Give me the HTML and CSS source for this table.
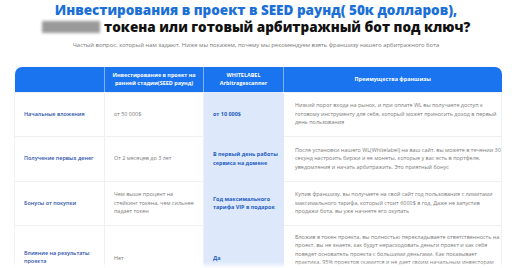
FILE: index.html
```html
<!DOCTYPE html>
<html lang="ru">
<head>
<meta charset="utf-8">
<link rel="stylesheet" href="styles.css">
</head>
<body>
<header class="hero">
  <h1 class="title">
    <span class="title-blue">Инвестирования в проект в SEED раунд( 50к долларов),</span>
    <span class="title-dark"><span class="blurred"></span> токена или готовый арбитражный бот под ключ?</span>
  </h1>
  <p class="subtitle">Частый вопрос, который нам задают. Ниже мы покажем, почему мы рекомендуем взять франшизу нашего арбитражного бота</p>
</header>
<div class="table-wrap">
  <table class="compare">
    <colgroup>
      <col class="c1"><col class="c2"><col class="c3"><col class="c4">
    </colgroup>
    <thead>
      <tr>
        <th></th>
        <th>Инвестирование в проект на<br>ранней стадии(SEED раунд)</th>
        <th>WHITELABEL<br>Arbitragescanner</th>
        <th>Преимущества франшизы</th>
      </tr>
    </thead>
    <tbody>
      <tr class="r1">
        <td class="label">Начальные вложения</td>
        <td class="plain">от 50 000$</td>
        <td class="wl">от 10 000$</td>
        <td class="desc">Низкий порог входа на рынок, и при оплате WL вы получаете доступ к<br>готовому инструменту для себя, который может приносить доход в первый<br>день пользования</td>
      </tr>
      <tr class="r2">
        <td class="label">Получение первых денег</td>
        <td class="plain">От 2 месяцев до 3 лет</td>
        <td class="wl">В первый день работы<br>сервиса на домене</td>
        <td class="desc">После установки нашего WL(Whitelabel) на ваш сайт, вы можете в течении 30<br>секунд настроить биржи и ее монеты, которые у вас есть в портфеле,<br>уведомления и начать арбитражить. Это приятный бонус</td>
      </tr>
      <tr class="r3">
        <td class="label">Бонусы от покупки</td>
        <td class="plain">Чем выше процент на<br>стейкинг токена, чем сильнее<br>падает токен</td>
        <td class="wl">Год максимального<br>тарифа VIP в подарок</td>
        <td class="desc">Купив франшизу, вы получаете на свой сайт год пользования с лимитами<br>максимального тарифа, который стоит 6000$ в год. Даже не запустив<br>продажи бота, вы уже начнете его окупать</td>
      </tr>
      <tr class="r4">
        <td class="label">Влияние на результаты<br>проекта</td>
        <td class="plain">Нет</td>
        <td class="wl">Да</td>
        <td class="desc">Вложив в токен проекта, вы полностью перекладываете ответственность на<br>проект, вы не знаете, как будут нерасходовать деньги проект и как себя<br>поведет основатель проекта с большими деньгами. Как показывает<br>практика, 95% проектов скамится и не дает своим начальным инвесторам<br>заработать</td>
      </tr>
    </tbody>
  </table>
</div>
<div class="fade"></div>
</body>
</html>
```

FILE: styles.css
```css
* { box-sizing: border-box; }
html, body { margin: 0; padding: 0; }
body {
  width: 512px;
  height: 268px;
  overflow: hidden;
  background: #fff;
  font-family: "Open Sans", "Liberation Sans", sans-serif;
  position: relative;
}
.hero { text-align: center; padding-top: 2px; }
.title {
  margin: 0;
  font-family: "Open Sans", sans-serif;
  font-weight: 800;
  font-size: 13.5px;
  line-height: 17px;
}
.title-blue { display: block; color: #1b6fd6; }
.title-dark { display: block; color: #111; }
.blurred {
  display: inline-block;
  width: 58px;
  height: 12px;
  vertical-align: -1px;
  background: #9a9a9a;
  filter: blur(1.6px);
  margin-right: 1px;
}
.subtitle {
  margin: 5px 0 0;
  font-size: 5.9px;
  line-height: 8px;
  color: #777;
}
.table-wrap { padding: 18px 11px 0 14px; }
.compare {
  width: 487px;
  border-collapse: collapse;
  table-layout: fixed;
  font-size: 5.45px;
  line-height: 8.5px;
}
.c1 { width: 90px; }
.c2 { width: 99px; }
.c3 { width: 80px; }
.c4 { width: 218px; }
.compare thead th {
  background: #1a74f0;
  color: #fff;
  font-weight: 700;
  height: 25px;
  padding: 0 2px;
  text-align: center;
  line-height: 8.6px;
  white-space: nowrap;
  border-left: 1px solid rgba(255,255,255,0.45);
}
.compare thead th:first-child { border-left: none; border-top-left-radius: 7px; }
.compare thead th:last-child { border-top-right-radius: 7px; }
.compare td {
  border: 1px solid #eef0f4;
  padding: 0 9px;
  vertical-align: middle;
  color: #7a7a7a;
  white-space: nowrap;
  overflow: hidden;
}
.compare td:first-child { border-left-color: #f0f1f4; }
.compare td:last-child { border-right-color: #f0f1f4; padding: 0 2px 0 11px; }
.r1 { height: 44px; }
.r2 { height: 45px; }
.r3 { height: 44px; }
.r4 { height: 70px; }
.compare td.label { color: #2a52a8; font-weight: 600; }
.compare td.wl {
  background: #dde9fb;
  color: #1f5cc0;
  font-weight: 700;
  border-color: #dde9fb;
  padding-right: 2px;
}
.compare td.desc { color: #7a7a7a; }
.r4 td.label { vertical-align: top; padding-top: 23px; }
.r4 td.plain, .r4 td.wl { vertical-align: top; padding-top: 28px; }
.r4 td.desc { vertical-align: top; padding-top: 7px; }
.fade {
  position: absolute;
  left: 0; right: 0; bottom: 0;
  height: 6px;
  background: linear-gradient(to bottom, rgba(255,255,255,0), rgba(255,255,255,0.95));
}
```
